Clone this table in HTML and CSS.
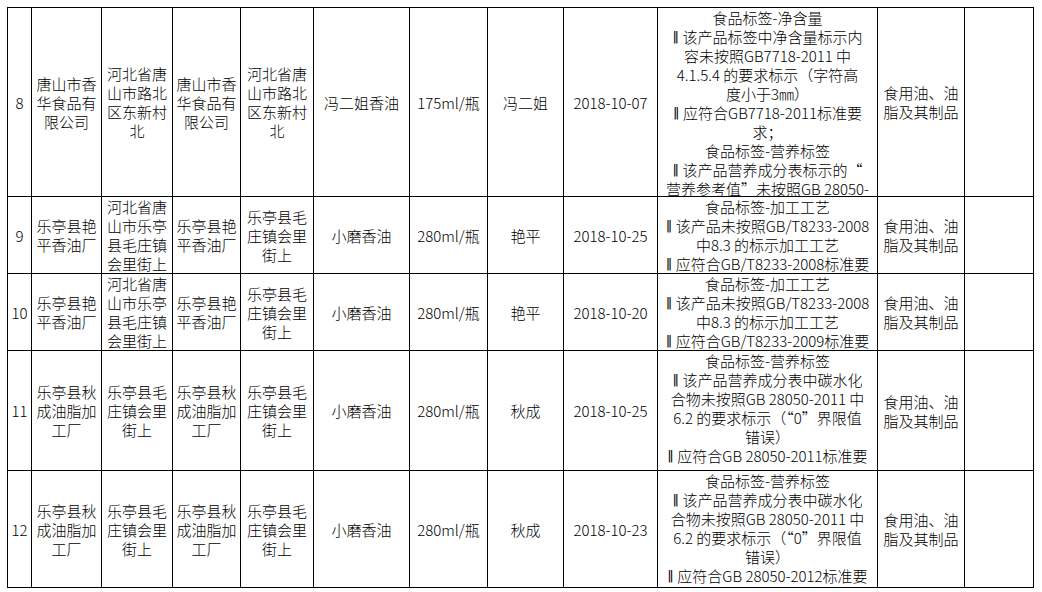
FILE: index.html
```html
<!DOCTYPE html>
<html lang="zh-CN">
<head>
<meta charset="utf-8">
<title>食品抽检不合格信息</title>
<link rel="stylesheet" href="styles.css">
</head>
<body>
<div class="page">
<table class="grid">
<colgroup>
<col class="c-no"><col class="c-ent"><col class="c-addr"><col class="c-ent2"><col class="c-addr2">
<col class="c-name"><col class="c-spec"><col class="c-brand"><col class="c-date"><col class="c-desc">
<col class="c-cat"><col class="c-note">
</colgroup>
<tbody>
<tr class="r8">
<td>8</td>
<td>唐山市香<br>华食品有<br>限公司</td>
<td>河北省唐<br>山市路北<br>区东新村<br>北</td>
<td>唐山市香<br>华食品有<br>限公司</td>
<td>河北省唐<br>山市路北<br>区东新村<br>北</td>
<td>冯二姐香油</td>
<td>175ml/瓶</td>
<td>冯二姐</td>
<td>2018-10-07</td>
<td class="desc-cell"><div class="desc">食品标签-净含量<br><span class="bar">‖</span>该产品标签中净含量标示内<br>容未按照GB7718-2011 中<br>4.1.5.4 的要求标示（字符高<br>度小于3㎜）<br><span class="bar">‖</span>应符合GB7718-2011标准要<br>求；<br>食品标签-营养标签<br><span class="bar">‖</span>该产品营养成分表标示的“<br>营养参考值”未按照GB 28050-</div></td>
<td>食用油、油<br>脂及其制品</td>
<td></td>
</tr>
<tr class="r9">
<td>9</td>
<td>乐亭县艳<br>平香油厂</td>
<td>河北省唐<br>山市乐亭<br>县毛庄镇<br>会里街上</td>
<td>乐亭县艳<br>平香油厂</td>
<td>乐亭县毛<br>庄镇会里<br>街上</td>
<td>小磨香油</td>
<td>280ml/瓶</td>
<td>艳平</td>
<td>2018-10-25</td>
<td class="desc-cell"><div class="desc">食品标签-加工工艺<br><span class="bar">‖</span>该产品未按照GB/T8233-2008<br>中8.3 的标示加工工艺<br><span class="bar">‖</span>应符合GB/T8233-2008标准要</div></td>
<td>食用油、油<br>脂及其制品</td>
<td></td>
</tr>
<tr class="r10">
<td>10</td>
<td>乐亭县艳<br>平香油厂</td>
<td>河北省唐<br>山市乐亭<br>县毛庄镇<br>会里街上</td>
<td>乐亭县艳<br>平香油厂</td>
<td>乐亭县毛<br>庄镇会里<br>街上</td>
<td>小磨香油</td>
<td>280ml/瓶</td>
<td>艳平</td>
<td>2018-10-20</td>
<td class="desc-cell"><div class="desc">食品标签-加工工艺<br><span class="bar">‖</span>该产品未按照GB/T8233-2008<br>中8.3 的标示加工工艺<br><span class="bar">‖</span>应符合GB/T8233-2009标准要</div></td>
<td>食用油、油<br>脂及其制品</td>
<td></td>
</tr>
<tr class="r11">
<td>11</td>
<td>乐亭县秋<br>成油脂加<br>工厂</td>
<td>乐亭县毛<br>庄镇会里<br>街上</td>
<td>乐亭县秋<br>成油脂加<br>工厂</td>
<td>乐亭县毛<br>庄镇会里<br>街上</td>
<td>小磨香油</td>
<td>280ml/瓶</td>
<td>秋成</td>
<td>2018-10-25</td>
<td class="desc-cell"><div class="desc">食品标签-营养标签<br><span class="bar">‖</span>该产品营养成分表中碳水化<br>合物未按照GB 28050-2011 中<br>6.2 的要求标示（“0”界限值<br>错误）<br><span class="bar">‖</span>应符合GB 28050-2011标准要</div></td>
<td>食用油、油<br>脂及其制品</td>
<td></td>
</tr>
<tr class="r12">
<td>12</td>
<td>乐亭县秋<br>成油脂加<br>工厂</td>
<td>乐亭县毛<br>庄镇会里<br>街上</td>
<td>乐亭县秋<br>成油脂加<br>工厂</td>
<td>乐亭县毛<br>庄镇会里<br>街上</td>
<td>小磨香油</td>
<td>280ml/瓶</td>
<td>秋成</td>
<td>2018-10-23</td>
<td class="desc-cell"><div class="desc">食品标签-营养标签<br><span class="bar">‖</span>该产品营养成分表中碳水化<br>合物未按照GB 28050-2011 中<br>6.2 的要求标示（“0”界限值<br>错误）<br><span class="bar">‖</span>应符合GB 28050-2012标准要</div></td>
<td>食用油、油<br>脂及其制品</td>
<td></td>
</tr>
</tbody>
</table>
</div>
</body>
</html>
```
FILE: styles.css
```css
html, body {
  margin: 0;
  padding: 0;
  background: #ffffff;
}

.page {
  padding: 7px;
}

.grid {
  border-collapse: collapse;
  table-layout: fixed;
  width: 1027px;
  font-family: "Noto Sans CJK SC", "Noto Sans", sans-serif;
  font-size: 15px;
  font-weight: 300;
  line-height: 19px;
  color: #000000;
}

.grid td {
  border: 1px solid #000000;
  padding: 0;
  text-align: center;
  vertical-align: middle;
  white-space: nowrap;
  overflow: hidden;
}

.c-no { width: 24px; }
.c-ent { width: 70px; }
.c-addr { width: 71px; }
.c-ent2 { width: 68px; }
.c-addr2 { width: 73px; }
.c-name { width: 96px; }
.c-spec { width: 78px; }
.c-brand { width: 76px; }
.c-date { width: 94px; }
.c-desc { width: 220px; }
.c-cat { width: 87px; }
.c-note { width: 69px; }

.grid td.desc-cell {
  vertical-align: top;
}

.desc {
  overflow: hidden;
  white-space: nowrap;
  text-align: center;
}

.bar {
  display: inline-block;
  width: 10px;
  height: 19px;
  line-height: 19px;
  vertical-align: top;
  font-family: "DejaVu Sans", sans-serif;
  font-size: 13px;
  font-weight: 400;
  color: #000000;
  text-align: left;
}

.r8 .desc { height: 188px; }
.r9 .desc { height: 75px; }
.r10 .desc { height: 76px; }
.r11 .desc { height: 119px; }
.r12 .desc { height: 116px; }
```
